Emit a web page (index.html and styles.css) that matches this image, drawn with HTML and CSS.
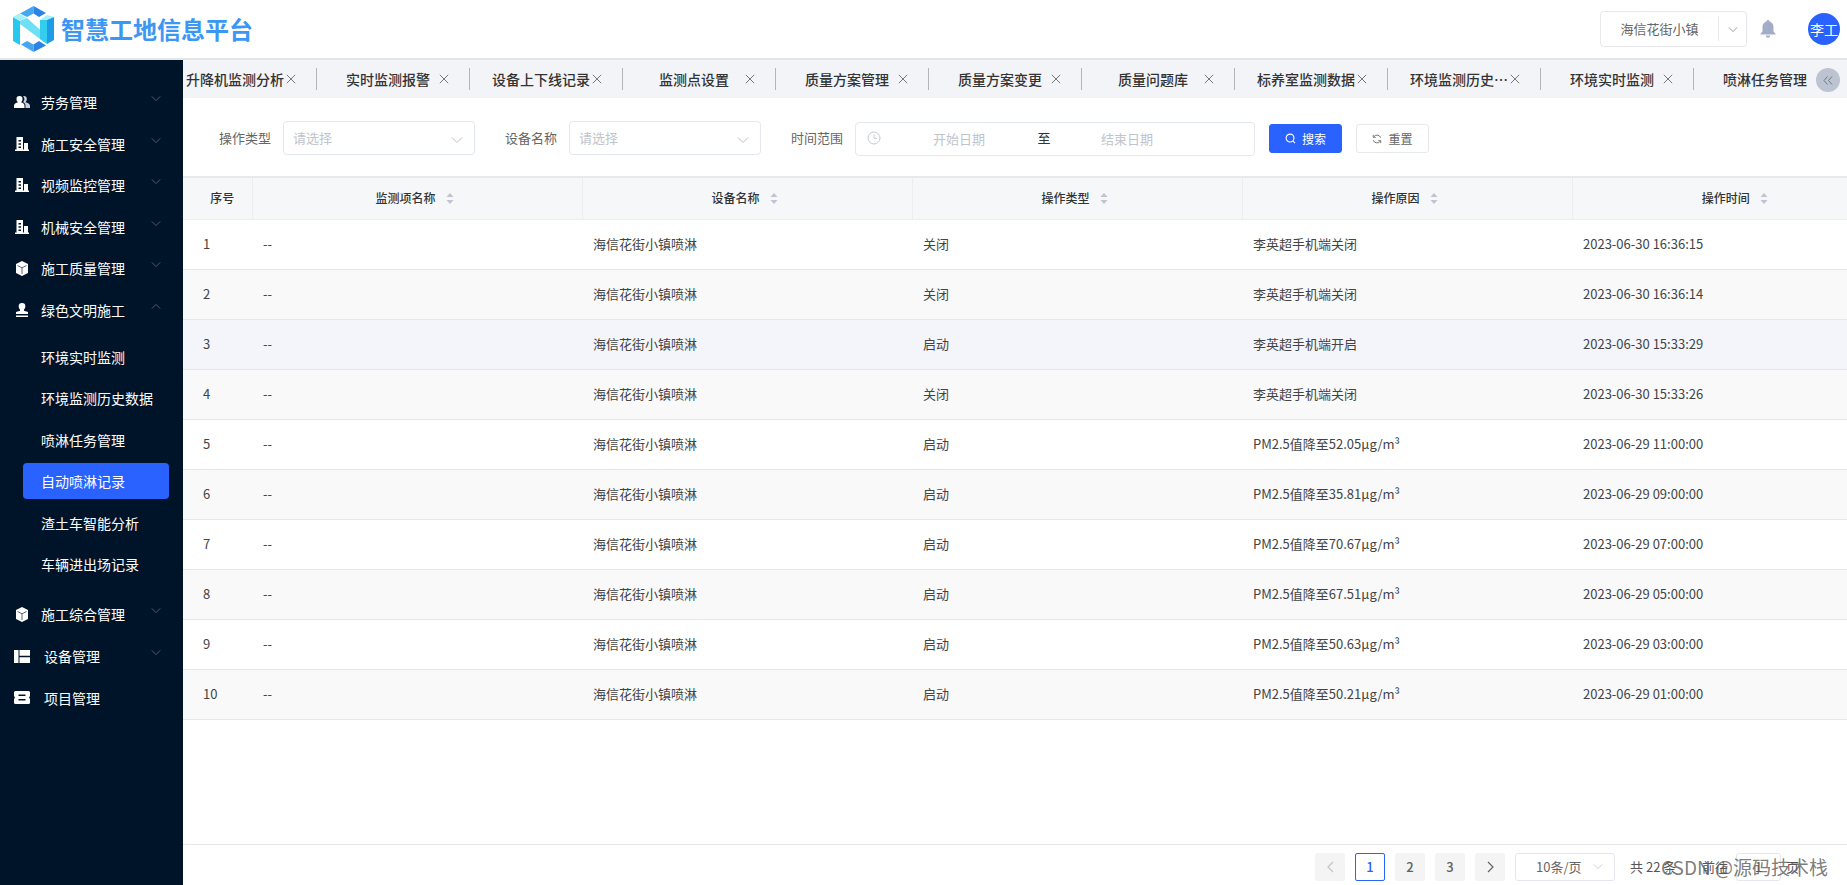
FILE: index.html
```html
<!DOCTYPE html>
<html lang="zh">
<head>
<meta charset="utf-8">
<title>智慧工地信息平台</title>
<link rel="stylesheet" href="styles.css">
</head>
<body>
<svg class="defs" width="0" height="0" aria-hidden="true">
  <symbol id="i-down" viewBox="0 0 12 8"><path d="M1 1.500l5 5 5-5" fill="none" stroke="currentColor" stroke-width="1"/></symbol>
  <symbol id="i-up" viewBox="0 0 12 8"><path d="M1 6.500l5-5 5 5" fill="none" stroke="currentColor" stroke-width="1"/></symbol>
  <symbol id="i-x" viewBox="0 0 10 10"><path d="M.8.8l8.400 8.400M9.200.8L.8 9.200" fill="none" stroke="currentColor" stroke-width="1"/></symbol>
  <symbol id="i-build" viewBox="0 0 14 14"><path fill="#fff" d="M1.500 0h6.500v12.500h1V6h4v6.500h1V14H0v-1.500h1.500zM3.500 3v1.600h2.500V3zm0 3.200v1.600h2.500V6.200zm0 3.200V11h2.500V9.400z" fill-rule="evenodd"/></symbol>
  <symbol id="i-cube" viewBox="0 0 14 15"><path fill="#fff" d="M7 0l6 3v9l-6 3-6-3V3z"/><path fill="none" stroke="#5d6b7d" stroke-width="1" d="M2.500 4.500L7 6.800l4.500-2.300M7 6.800V13"/></symbol>
  <symbol id="i-sort" viewBox="0 0 8 11"><path fill="#c0c4d0" d="M4 0l3.500 4h-7zM4 11L.5 7h7z"/></symbol>
</svg>

<header class="topbar">
  <div class="brand">
    <svg class="logo" viewBox="0 0 41 46" width="41" height="46">
      <path fill="#45a6f2" d="M20.500 0v7.500L14 11 7 7.500z"/>
      <path fill="#2a84e4" d="M20.500 0L33 7l-7 4-5.500-3.500z"/>
      <path fill="#45a6f2" d="M20.500 46v-7.500L14 35l-6 3.500z"/>
      <path fill="#2a84e4" d="M20.500 46L33 39.500 26 35l-5.500 3.500z"/>
      <path fill="#27c8ee" d="M0 11l7 4v24l-7-4z"/>
      <path fill="#a4f1fa" d="M0 11l6-3.500 8 4.500-7 3z"/>
      <path fill="#6ee0f5" d="M7 15l7-3 20 18v8l-7-5-20-15z"/>
      <path fill="#34cdee" d="M27 14h7v24l-7-5z"/>
      <path fill="#a4f1fa" d="M27 14l7-5 7 2-7 3z"/>
      <path fill="#1e9ce6" d="M34 14l7-3v23l-7 4z"/>
    </svg>
    <span class="brand-name">智慧工地信息平台</span>
  </div>
  <div class="top-right">
    <div class="site-select">
      <span class="site-name">海信花街小镇</span>
      <span class="site-arrow"><svg width="10" height="7"><use href="#i-down"/></svg></span>
    </div>
    <svg class="bell" viewBox="0 0 16 18" width="16" height="18"><path fill="#a3adc7" d="M8 0a1.500 1.500 0 0 1 1.500 1.600C12 2.300 13.500 4.500 13.500 7v4.500L16 14.500H0l2.500-3V7c0-2.500 1.500-4.700 4-5.400A1.500 1.500 0 0 1 8 0zM5.800 15.500h4.400a2.200 2.200 0 0 1-4.400 0z"/></svg>
    <div class="avatar">李工</div>
  </div>
</header>

<div class="shell">
  <nav class="sidebar">
    <div class="menu-item"><svg class="mi" viewBox="0 0 16 14" width="16" height="14"><path fill="#c9d1dc" d="M10 1a3 3 0 0 1 2.800 3.200c0 1.300-.7 2.500-1.400 3 2.200.5 4.600 1.700 4.600 3.300V13h-4.500v-2.500c0-1.500-1-2.700-2.500-3.500.8-.8 1.300-1.800 1.300-2.800 0-1.200-.5-2.300-1.300-3z"/><path fill="#fff" d="M5.500 1a3 3 0 0 1 3 3.200c0 1.300-.8 2.500-1.500 3 2 .6 3.500 1.800 3.500 3.300V13H0v-2.500C0 9 1.800 7.800 4 7.200 3.200 6.700 2.500 5.500 2.500 4.200A3 3 0 0 1 5.500 1z"/></svg><span>劳务管理</span><svg class="chev" width="10" height="7"><use href="#i-down"/></svg></div>
    <div class="menu-item"><svg class="mi" width="14" height="14"><use href="#i-build"/></svg><span>施工安全管理</span><svg class="chev" width="10" height="7"><use href="#i-down"/></svg></div>
    <div class="menu-item"><svg class="mi" width="14" height="14"><use href="#i-build"/></svg><span>视频监控管理</span><svg class="chev" width="10" height="7"><use href="#i-down"/></svg></div>
    <div class="menu-item"><svg class="mi" width="14" height="14"><use href="#i-build"/></svg><span>机械安全管理</span><svg class="chev" width="10" height="7"><use href="#i-down"/></svg></div>
    <div class="menu-item"><svg class="mi" width="14" height="15"><use href="#i-cube"/></svg><span>施工质量管理</span><svg class="chev" width="10" height="7"><use href="#i-down"/></svg></div>
    <div class="menu-item"><svg class="mi" viewBox="0 0 13 14" width="13" height="14"><path fill="#fff" d="M6.500 0a3.300 3.300 0 0 1 3.300 3.500c0 1.300-.6 2.300-1.300 3v1.200l4 1.300V11H.5V9l4-1.300V6.500c-.7-.7-1.300-1.700-1.300-3A3.300 3.300 0 0 1 6.500 0zM.5 12.500h12V14H.5z"/></svg><span>绿色文明施工</span><svg class="chev" width="10" height="7"><use href="#i-up"/></svg></div>
    <div class="submenu">
      <div class="sub-item">环境实时监测</div>
      <div class="sub-item">环境监测历史数据</div>
      <div class="sub-item">喷淋任务管理</div>
      <div class="sub-item active">自动喷淋记录</div>
      <div class="sub-item">渣土车智能分析</div>
      <div class="sub-item">车辆进出场记录</div>
    </div>
    <div class="menu-item"><svg class="mi" width="14" height="15"><use href="#i-cube"/></svg><span>施工综合管理</span><svg class="chev" width="10" height="7"><use href="#i-down"/></svg></div>
    <div class="menu-item wide"><svg class="mi" viewBox="0 0 16 13" width="16" height="13"><path fill="#fff" d="M0 0h4.500v13H0zM5.500 0H16v5.800H5.500zM5.500 7.200H16V13H5.500z"/></svg><span>设备管理</span><svg class="chev" width="10" height="7"><use href="#i-down"/></svg></div>
    <div class="menu-item wide"><svg class="mi" viewBox="0 0 16 13" width="16" height="13"><path fill="#fff" fill-rule="evenodd" d="M1.500 0h13A1.500 1.500 0 0 1 16 1.500V5l-1 1.500 1 1.500v3.500a1.500 1.500 0 0 1-1.500 1.500h-13A1.500 1.500 0 0 1 0 11.500V8l1-1.500L0 5V1.500A1.500 1.500 0 0 1 1.500 0zM4.500 3.500V5h7V3.500zm0 4.500v1.500h7V8z"/></svg><span>项目管理</span></div>
  </nav>

  <main class="content">
    <div class="tabs">
      <div class="tab"><span class="tab-label">升降机监测分析</span><svg class="tab-x" width="10" height="10"><use href="#i-x"/></svg></div>
      <div class="tab"><span class="tab-label">实时监测报警</span><svg class="tab-x" width="10" height="10"><use href="#i-x"/></svg></div>
      <div class="tab"><span class="tab-label">设备上下线记录</span><svg class="tab-x" width="10" height="10"><use href="#i-x"/></svg></div>
      <div class="tab"><span class="tab-label">监测点设置</span><svg class="tab-x" width="10" height="10"><use href="#i-x"/></svg></div>
      <div class="tab"><span class="tab-label">质量方案管理</span><svg class="tab-x" width="10" height="10"><use href="#i-x"/></svg></div>
      <div class="tab"><span class="tab-label">质量方案变更</span><svg class="tab-x" width="10" height="10"><use href="#i-x"/></svg></div>
      <div class="tab"><span class="tab-label">质量问题库</span><svg class="tab-x" width="10" height="10"><use href="#i-x"/></svg></div>
      <div class="tab"><span class="tab-label">标养室监测数据</span><svg class="tab-x" width="10" height="10"><use href="#i-x"/></svg></div>
      <div class="tab"><span class="tab-label">环境监测历史数据</span><svg class="tab-x" width="10" height="10"><use href="#i-x"/></svg></div>
      <div class="tab"><span class="tab-label">环境实时监测</span><svg class="tab-x" width="10" height="10"><use href="#i-x"/></svg></div>
      <div class="tab last"><span class="tab-label">喷淋任务管理</span></div>
      <div class="tab-collapse"><svg viewBox="0 0 10 9" width="10" height="9"><path d="M4.500.5L1 4.500l3.500 4M9 .5L5.500 4.500 9 8.500" fill="none" stroke="#6f7785" stroke-width="1"/></svg></div>
    </div>

    <form class="filters">
      <label class="f-label">操作类型</label>
      <div class="f-select"><span>请选择</span><svg width="12" height="8"><use href="#i-down"/></svg></div>
      <label class="f-label">设备名称</label>
      <div class="f-select"><span>请选择</span><svg width="12" height="8"><use href="#i-down"/></svg></div>
      <label class="f-label">时间范围</label>
      <div class="f-date">
        <svg class="clock" viewBox="0 0 14 14" width="14" height="14"><circle cx="7" cy="7" r="6" fill="none" stroke="#c6cad3"/><path d="M7 3.500V7.300h3" fill="none" stroke="#c6cad3"/></svg>
        <span class="d-ph">开始日期</span><span class="d-to">至</span><span class="d-ph">结束日期</span>
      </div>
      <button type="button" class="btn primary"><svg viewBox="0 0 12 12" width="11" height="11"><circle cx="5.500" cy="5.500" r="4.300" fill="none" stroke="#fff" stroke-width="1.200"/><path d="M8.500 8.500l2.500 2.500" stroke="#fff" stroke-width="1.200"/></svg>搜索</button>
      <button type="button" class="btn"><svg viewBox="0 0 12 12" width="10" height="10"><path d="M10.500 4.500A4.800 4.800 0 0 0 2 3.500M1.500 7.500A4.800 4.800 0 0 0 10 8.500" fill="none" stroke="#666" stroke-width="1.100"/><path d="M1.500 1v3h3M10.500 11V8h-3" fill="none" stroke="#666"/></svg>重置</button>
    </form>

    <div class="table-wrap">
      <table class="grid">
        <thead>
          <tr>
            <th class="c-no">序号</th>
            <th class="c-md">监测项名称<svg class="sort" width="8" height="11"><use href="#i-sort"/></svg></th>
            <th class="c-md">设备名称<svg class="sort" width="8" height="11"><use href="#i-sort"/></svg></th>
            <th class="c-md">操作类型<svg class="sort" width="8" height="11"><use href="#i-sort"/></svg></th>
            <th class="c-md">操作原因<svg class="sort" width="8" height="11"><use href="#i-sort"/></svg></th>
            <th class="c-md">操作时间<svg class="sort" width="8" height="11"><use href="#i-sort"/></svg></th>
          </tr>
        </thead>
        <tbody>
          <tr><td>1</td><td>--</td><td>海信花街小镇喷淋</td><td>关闭</td><td>李英超手机端关闭</td><td>2023-06-30 16:36:15</td></tr>
          <tr><td>2</td><td>--</td><td>海信花街小镇喷淋</td><td>关闭</td><td>李英超手机端关闭</td><td>2023-06-30 16:36:14</td></tr>
          <tr class="hover"><td>3</td><td>--</td><td>海信花街小镇喷淋</td><td>启动</td><td>李英超手机端开启</td><td>2023-06-30 15:33:29</td></tr>
          <tr><td>4</td><td>--</td><td>海信花街小镇喷淋</td><td>关闭</td><td>李英超手机端关闭</td><td>2023-06-30 15:33:26</td></tr>
          <tr><td>5</td><td>--</td><td>海信花街小镇喷淋</td><td>启动</td><td>PM2.5值降至52.05μg/m³</td><td>2023-06-29 11:00:00</td></tr>
          <tr><td>6</td><td>--</td><td>海信花街小镇喷淋</td><td>启动</td><td>PM2.5值降至35.81μg/m³</td><td>2023-06-29 09:00:00</td></tr>
          <tr><td>7</td><td>--</td><td>海信花街小镇喷淋</td><td>启动</td><td>PM2.5值降至70.67μg/m³</td><td>2023-06-29 07:00:00</td></tr>
          <tr><td>8</td><td>--</td><td>海信花街小镇喷淋</td><td>启动</td><td>PM2.5值降至67.51μg/m³</td><td>2023-06-29 05:00:00</td></tr>
          <tr><td>9</td><td>--</td><td>海信花街小镇喷淋</td><td>启动</td><td>PM2.5值降至50.63μg/m³</td><td>2023-06-29 03:00:00</td></tr>
          <tr><td>10</td><td>--</td><td>海信花街小镇喷淋</td><td>启动</td><td>PM2.5值降至50.21μg/m³</td><td>2023-06-29 01:00:00</td></tr>
        </tbody>
      </table>
    </div>

    <footer class="pager">
      <span class="pg disabled"><svg viewBox="0 0 7 12" width="7" height="12"><path d="M6 1L1 6l5 5" fill="none" stroke="currentColor" stroke-width="1.200"/></svg></span>
      <span class="pg current">1</span>
      <span class="pg">2</span>
      <span class="pg">3</span>
      <span class="pg"><svg viewBox="0 0 7 12" width="7" height="12"><path d="M1 1l5 5-5 5" fill="none" stroke="currentColor" stroke-width="1.200"/></svg></span>
      <span class="pg-size"><span>10条/页</span><svg width="10" height="7"><use href="#i-down"/></svg></span>
      <span class="pg-total">共 22 条</span>
      <span class="pg-jump">前往</span>
      <span class="pg-input">1</span>
      <span class="pg-jump">页</span>
    </footer>
  </main>
</div>
<div class="watermark">CSDN @源码技术栈</div>
</body>
</html>
```
FILE: styles.css
```css
* { box-sizing: border-box; }
html, body { margin: 0; padding: 0; height: 100%; overflow: hidden; }
body {
  font-family: "Noto Sans CJK SC", "Noto Sans", sans-serif;
  font-size: 13px;
  color: #333;
  background: #fff;
  position: relative;
}
.defs { position: absolute; }

.topbar {
  height: 60px;
  display: flex;
  align-items: center;
  justify-content: space-between;
  border-bottom: 2px solid #e4e5e7;
  background: #fff;
}
.brand { display: flex; align-items: center; padding-left: 13px; gap: 7px; }
.logo { display: block; }
.brand-name { font-size: 24px; font-weight: 700; color: #3b97f3; line-height: 32px; margin-top: -1px; }
.top-right { display: flex; align-items: center; padding-right: 7px; }
.site-select {
  width: 147px; height: 36px;
  display: flex; align-items: center;
  border: 1px solid #e6e8ec; border-radius: 4px;
  color: #666;
}
.site-name { width: 118px; text-align: center; border-right: 1px solid #e6e8ec; line-height: 24px; }
.site-arrow { flex: 1; display: flex; justify-content: center; color: #888; }
.bell { margin-left: 13px; }
.avatar {
  width: 32px; height: 32px; margin-left: 32px; border-radius: 50%;
  background: #2962ff; color: #fff; font-size: 14px; line-height: 32px; text-align: center;
}

.shell { display: flex; height: 825px; }
.sidebar {
  width: 183px; flex: none; background: #001429; color: #fff;
  padding-top: 24px; display: flex; flex-direction: column; gap: 5.600px;
}
.menu-item {
  height: 36px; display: flex; align-items: center; position: relative;
  padding-left: 14px; font-size: 14px;
}
.menu-item .mi { flex: none; width: 16px; margin-right: 11px; }
.menu-item.wide .mi { margin-right: 14px; }
.chev { position: absolute; left: 151px; top: 11px; color: #5d6b7d; }
.submenu { display: flex; flex-direction: column; gap: 5.500px; margin: 5px 0 8.800px; }
.sub-item {
  height: 36px; line-height: 36px; margin: 0 14px 0 23px; padding-left: 18px;
  font-size: 14px; border-radius: 4px; white-space: nowrap;
}
.sub-item.active { background: #2962ff; }

.content { flex: 1; min-width: 0; display: flex; flex-direction: column; position: relative; }
.tabs {
  height: 38px; background: #f3f4f8; display: flex; align-items: center;
  overflow: hidden; position: relative; flex: none;
}
.tab {
  width: 153px; flex: none; height: 22px; display: flex; align-items: center;
  padding-left: 22px; border-right: 1px solid #b2b5ba; font-size: 14px; font-weight: 500; color: #333;
}
.tabs .tab:first-child { width: 134px; padding-left: 3px; }
.tab-label {
  width: 98px; text-align: center; white-space: nowrap; overflow: hidden; text-overflow: ellipsis; line-height: 22px;
  margin-right: 2px; flex: none;
}
.tab-x { color: #777; flex: none; }
.tab.last { border-right: 0; }
.tab-collapse {
  position: absolute; right: 7px; top: 8px; width: 24px; height: 24px; border-radius: 50%;
  background: #bcc3d1; display: flex; align-items: center; justify-content: center;
}

.filters { height: 79px; flex: none; display: flex; align-items: center; padding: 1px 0 0 36px; }
.f-label { color: #666; width: 52px; white-space: nowrap; margin-top: -1px; }
.f-select {
  width: 192px; height: 34px; margin: 0 30px 0 12px; padding: 0 11px 0 9px;
  display: flex; align-items: center; justify-content: space-between;
  border: 1px solid #e4e7ed; border-radius: 4px; color: #c0c4cc;
}
.f-select span { margin-top: -2px; }
.f-select svg { margin-top: 4px; color: #bcc0c8; }
.f-date {
  width: 400px; height: 34px; margin: 1px 0 0 12px; border: 1px solid #e4e7ed; border-radius: 4px;
  display: flex; align-items: center; padding-left: 11px; color: #c0c4cc;
}
.clock { flex: none; margin-right: 52px; margin-top: -2px; }
.d-ph { width: 52px; white-space: nowrap; }
.d-to { color: #333; width: 116px; text-align: center; margin-top: -2px; padding-left: 2px; }
.btn {
  height: 29px; width: 73px; margin: 1px 0 0 14px; border: 1px solid #e6e8ec; border-radius: 3px; background: #fff;
  font: inherit; font-size: 12px; color: #666; display: flex; align-items: center; justify-content: center; gap: 6px; padding: 0;
}
.btn.primary { background: #2962ff; border-color: #2962ff; color: #fff; }

.table-wrap { flex: 1; min-height: 0; border-top: 2px solid #e8e9eb; margin-top: -1px; overflow: hidden; }
.grid { width: 1719px; border-collapse: collapse; table-layout: fixed; }
.grid th {
  height: 41px; background: #f6f7f9; font-weight: 500; font-size: 12px; color: #333; text-align: center;
  border-bottom: 1px solid #ebedf0; border-right: 1px solid #ebedf0; padding: 0 5px 2px 0;
}
.grid th:last-child { border-right: 0; }
.grid th.c-no { padding: 0 0 2px 10px; }
.c-no { width: 69px; }
.c-md { width: 330px; }
.sort { margin-left: 10px; vertical-align: -1px; }
.grid td {
  height: 50px; padding: 0 0 2px 11px; border-bottom: 1px solid #e5e7ea; font-size: 13px; color: #444; white-space: nowrap;
}
.grid td:first-child { padding-left: 20px; }
.grid tbody tr:nth-child(even) { background: #f9f9fa; }
.grid tbody tr.hover { background: #f3f5fa; }

.pager {
  height: 41px; flex: none; border-top: 1px solid #e5e7ea; display: flex; align-items: center;
  padding: 3px 0 0 1132px; font-size: 13px; color: #555;
}
.pg {
  width: 30px; height: 28px; background: #f4f4f5; border-radius: 2px; margin-right: 10px;
  display: flex; align-items: center; justify-content: center; font-weight: 500; color: #606266;
}
.pg.disabled { color: #c0c4cc; }
.pg.current { background: #fff; border: 1px solid #2962ff; color: #2962ff; }
.pg-size {
  width: 100px; height: 28px; border: 1px solid #e4e7ed; border-radius: 3px; margin-right: 15px;
  display: flex; align-items: center; justify-content: space-between; padding: 0 11px 0 20px; color: #666;
}
.pg-size svg { color: #c0c4cc; }
.pg-total { width: 72px; white-space: nowrap; }
.pg-jump { white-space: nowrap; }
.pg-input { width: 45px; height: 28px; margin: 0 5px 0 8px; border: 1px solid #e4e7ed; border-radius: 3px; text-align: center; line-height: 26px; }

.watermark {
  position: absolute; left: 1661px; top: 853px; font-size: 19px; line-height: 28px; color: rgba(90, 90, 90, .8); white-space: nowrap;
}
```
